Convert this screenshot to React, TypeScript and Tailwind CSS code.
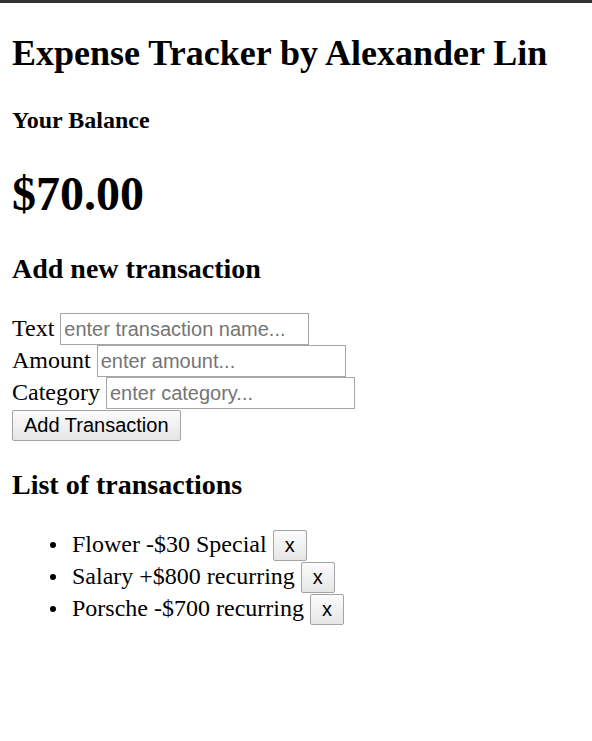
const transactions = [
  { text: 'Flower', amount: -30, category: 'Special' },
  { text: 'Salary', amount: 800, category: 'recurring' },
  { text: 'Porsche', amount: -700, category: 'recurring' },
];

const serif = "font-['Liberation_Serif','Times_New_Roman',serif]";
const sans = "font-['Liberation_Sans',Arial,sans-serif]";

function Field({ label, placeholder }: { label: string; placeholder: string }) {
  return (
    <div className="flex items-center h-[32px] gap-[6px]">
      <label className="pb-[3px] leading-[28px]">{label}</label>
      <input
        type="text"
        placeholder={placeholder}
        className={`${sans} w-[249px] h-[32px] border border-[#a6a6a6] px-[3px] text-[20px] text-black placeholder:text-[#757575] outline-none bg-white`}
      />
    </div>
  );
}

export default function App() {
  const balance = transactions.reduce((sum, t) => sum + t.amount, 0);

  return (
    <div className={`${serif} min-h-screen bg-white text-black text-[24px]`}>
      <div className="h-[3px] bg-[#333333]" />
      <div className="flex flex-col px-[12px]">
        <h2 className="mt-[30px] text-[36px] leading-[41px] font-bold">Expense Tracker by Alexander Lin</h2>

        <h4 className="mt-[32px] text-[24px] leading-[28px] font-bold">Your Balance</h4>
        <h1 className="mt-[32px] text-[48px] leading-[55px] font-bold">${balance.toFixed(2)}</h1>

        <h3 className="mt-[32px] text-[28px] leading-[32px] font-bold">Add new transaction</h3>
        <form className="mt-[28px] flex flex-col" onSubmit={(e) => e.preventDefault()}>
          <Field label="Text" placeholder="enter transaction name..." />
          <Field label="Amount" placeholder="enter amount..." />
          <Field label="Category" placeholder="enter category..." />
          <div className="mt-[1px] h-[31px] flex items-start">
            <button
              type="submit"
              className={`${sans} h-[31px] px-[11px] text-[20px] leading-[23px] border border-[#a3a3a3] rounded-[2px] bg-linear-to-b from-[#fbfbfb] to-[#e6e6e6] text-black`}
            >
              Add Transaction
            </button>
          </div>
        </form>

        <h3 className="mt-[28px] text-[28px] leading-[32px] font-bold">List of transactions</h3>
        <ul className="mt-[28px] pl-[38px]">
          {transactions.map((t, i) => (
            <li key={i} className="flex items-center h-[32px]">
              <span className="w-[6px] h-[6px] rounded-full bg-black mr-[16px]" />
              <span className="pb-[3px] leading-[28px] mr-[6px]">
                {t.text} {t.amount < 0 ? '-' : '+'}${Math.abs(t.amount)} {t.category}
              </span>
              <button
                className={`${sans} h-[31px] px-[11px] text-[20px] leading-[23px] border border-[#a3a3a3] rounded-[2px] bg-linear-to-b from-[#fbfbfb] to-[#e6e6e6] text-black`}
              >
                x
              </button>
            </li>
          ))}
        </ul>
      </div>
    </div>
  );
}
